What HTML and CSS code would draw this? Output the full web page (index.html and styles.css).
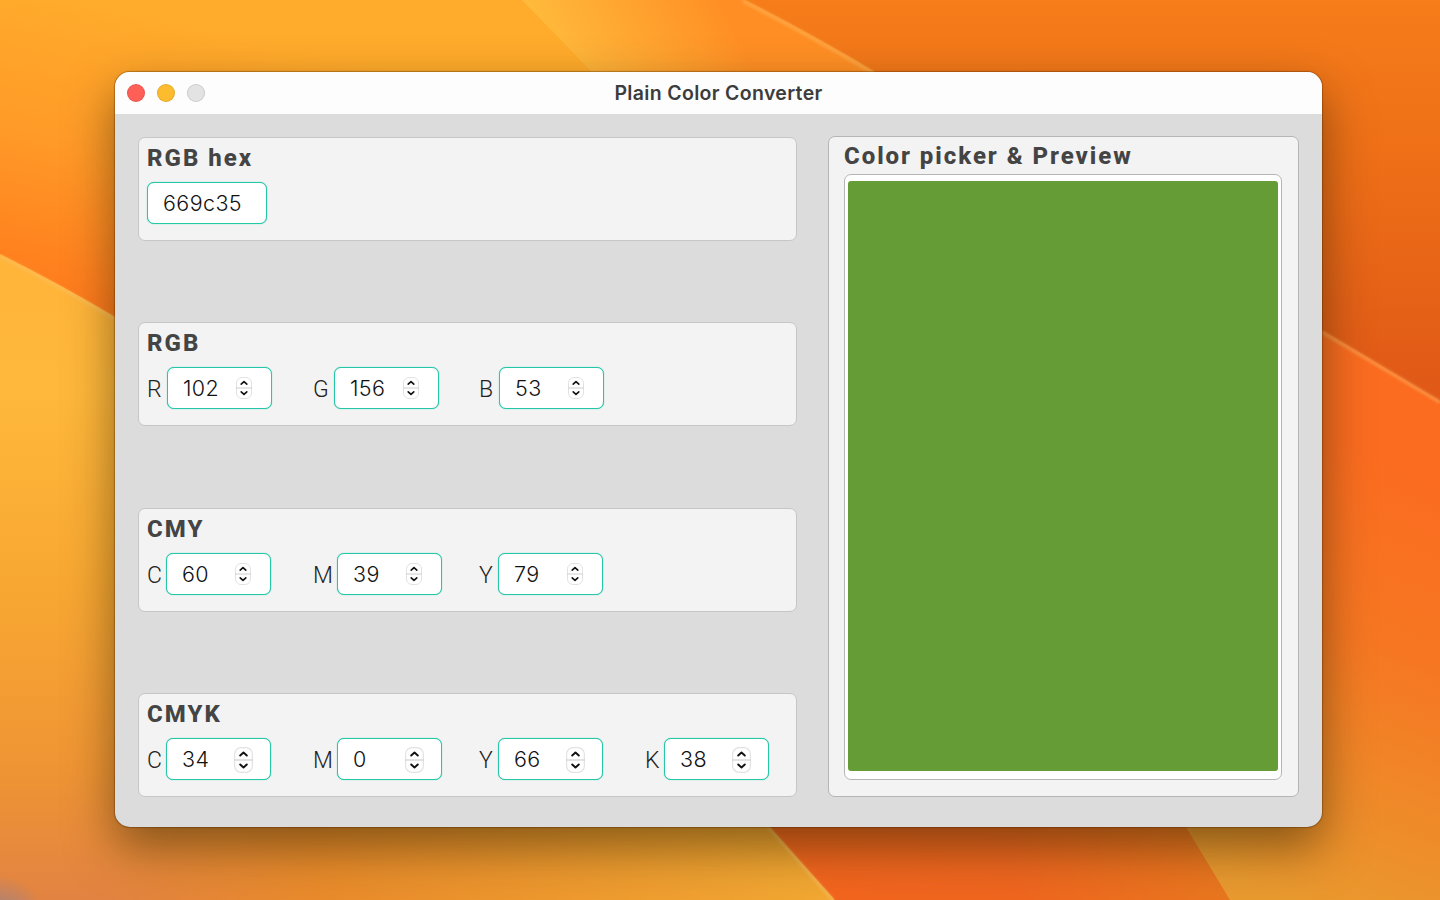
FILE: index.html
```
<!DOCTYPE html>
<html lang="en">
<head>
  <meta charset="UTF-8">
  <meta name="viewport" content="width=device-width, initial-scale=1.0">
  <title>Plain Color Converter</title>
  <link rel="stylesheet" href="styles.css">
</head>
<body>
  <svg class="wallpaper" viewBox="0 0 1440 900" preserveAspectRatio="none" aria-hidden="true">
    <defs>
      <linearGradient id="sky" gradientUnits="userSpaceOnUse" x1="60" y1="0" x2="0" y2="290">
        <stop offset="0" stop-color="#ffab2b"/>
        <stop offset="0.45" stop-color="#ff9b28"/>
        <stop offset="1" stop-color="#ff7a1c"/>
      </linearGradient>
      <linearGradient id="dune" gradientUnits="userSpaceOnUse" x1="0" y1="260" x2="0" y2="900">
        <stop offset="0" stop-color="#ffb43a"/>
        <stop offset="0.2" stop-color="#ffb83b"/>
        <stop offset="0.5" stop-color="#f8a832"/>
        <stop offset="0.8" stop-color="#ef9434"/>
        <stop offset="1" stop-color="#e28342"/>
      </linearGradient>
      <linearGradient id="duneGlow" gradientUnits="userSpaceOnUse" x1="100" y1="0" x2="830" y2="0">
        <stop offset="0" stop-color="#e98b2b" stop-opacity="0"/>
        <stop offset="0.3" stop-color="#e98b2b"/>
        <stop offset="1" stop-color="#f2a832"/>
      </linearGradient>
      <radialGradient id="corner" gradientUnits="userSpaceOnUse" cx="0" cy="920" r="45">
        <stop offset="0" stop-color="#98828a"/>
        <stop offset="1" stop-color="#98828a" stop-opacity="0"/>
      </radialGradient>
      <linearGradient id="band" gradientUnits="userSpaceOnUse" x1="540" y1="40" x2="700" y2="-40">
        <stop offset="0" stop-color="#ffbb3c"/>
        <stop offset="1" stop-color="#ff8f24"/>
      </linearGradient>
      <linearGradient id="ridge" gradientUnits="userSpaceOnUse" x1="0" y1="0" x2="0" y2="390">
        <stop offset="0" stop-color="#f67d1a"/>
        <stop offset="0.4" stop-color="#ee6f17"/>
        <stop offset="1" stop-color="#e05917"/>
      </linearGradient>
      <linearGradient id="slope" gradientUnits="userSpaceOnUse" x1="1440" y1="480" x2="1280" y2="900">
        <stop offset="0" stop-color="#fb6c20"/>
        <stop offset="0.4" stop-color="#f67722"/>
        <stop offset="1" stop-color="#e99a2f"/>
      </linearGradient>
      <linearGradient id="gap" gradientUnits="userSpaceOnUse" x1="800" y1="0" x2="1230" y2="0">
        <stop offset="0" stop-color="#f3651e"/>
        <stop offset="0.5" stop-color="#ef661f"/>
        <stop offset="1" stop-color="#e9771f"/>
      </linearGradient>
    </defs>
    <rect width="1440" height="900" fill="url(#sky)"/>
    <path d="M522 0H745Q812 34 875 72L900 300L592 72Z" fill="url(#band)"/>
    <path d="M745 0H1440V420L1300 400L875 72Q812 34 745 0Z" fill="url(#ridge)"/>
    <path d="M0 254Q60 284 115 317L600 640L770 827L835 900H0Z" fill="url(#dune)"/>
    <path d="M100 740H690L770 827L835 900H100Z" fill="url(#duneGlow)"/>
    <rect y="840" width="70" height="60" fill="url(#corner)"/>
    <path d="M770 827L700 740H1180L1230 900H835Z" fill="url(#gap)"/>
    <path d="M1300 318L1322 330L1440 401V900H1230L1186 827L1100 700Z" fill="url(#slope)"/>
    <g class="edges">
      <path d="M743 1Q810 35 873 73"/>
      <path d="M0 256Q60 286 115 319"/>
      <path d="M1322 332L1440 402"/>
      <path d="M768 827L833 900"/>
    </g>
  </svg>

  <div class="window">
    <header class="titlebar">
      <div class="lights">
        <span class="light close"></span>
        <span class="light minimize"></span>
        <span class="light disabled"></span>
      </div>
      <h1>Plain Color Converter</h1>
    </header>

    <main class="content">
      <div class="models">
        <section class="panel">
          <h2>RGB hex</h2>
          <div class="fields">
            <span class="input hex">669c35</span>
          </div>
        </section>

        <section class="panel">
          <h2>RGB</h2>
          <div class="fields">
            <div class="field"><label class="w20">R</label><span class="input">102<svg class="stepper" viewBox="0 0 16 22"><use href="#arrows"/></svg></span></div>
            <div class="field"><label class="w21">G</label><span class="input">156<svg class="stepper" viewBox="0 0 16 22"><use href="#arrows"/></svg></span></div>
            <div class="field"><label class="w20">B</label><span class="input">53<svg class="stepper" viewBox="0 0 16 22"><use href="#arrows"/></svg></span></div>
          </div>
        </section>

        <section class="panel">
          <h2>CMY</h2>
          <div class="fields">
            <div class="field"><label>C</label><span class="input">60<svg class="stepper" viewBox="0 0 16 22"><use href="#arrows"/></svg></span></div>
            <div class="field"><label class="w24">M</label><span class="input">39<svg class="stepper" viewBox="0 0 16 22"><use href="#arrows"/></svg></span></div>
            <div class="field"><label>Y</label><span class="input">79<svg class="stepper" viewBox="0 0 16 22"><use href="#arrows"/></svg></span></div>
          </div>
        </section>

        <section class="panel">
          <h2>CMYK</h2>
          <div class="fields large">
            <div class="field"><label>C</label><span class="input">34<svg class="stepper" viewBox="0 0 16 22"><use href="#arrows"/></svg></span></div>
            <div class="field"><label class="w24">M</label><span class="input">0<svg class="stepper" viewBox="0 0 16 22"><use href="#arrows"/></svg></span></div>
            <div class="field"><label>Y</label><span class="input">66<svg class="stepper" viewBox="0 0 16 22"><use href="#arrows"/></svg></span></div>
            <div class="field"><label>K</label><span class="input">38<svg class="stepper" viewBox="0 0 16 22"><use href="#arrows"/></svg></span></div>
          </div>
        </section>
      </div>

      <section class="panel preview">
        <h2>Color picker &amp; Preview</h2>
        <div class="well"><div class="swatch"></div></div>
      </section>
    </main>
  </div>

  <svg class="symbols" aria-hidden="true">
    <symbol id="arrows" viewBox="0 0 16 22">
      <rect x="0.5" y="0.5" width="15" height="21" rx="5.5" fill="#fff" stroke="#e2e2e2"/>
      <path d="M0 11H16" stroke="#cfcfcf"/>
      <path d="M5.2 7.2L8 4.6L10.8 7.2M5.2 14.8L8 17.4L10.8 14.8" fill="none" stroke="#111" stroke-width="1.6" stroke-linecap="round" stroke-linejoin="round"/>
    </symbol>
  </svg>
</body>
</html>
```
FILE: styles.css
```
* {
  box-sizing: border-box;
}

body {
  margin: 0;
  height: 100vh;
  overflow: hidden;
  padding: 72px 118px 73px 115px;
  font-family: Inter, "Liberation Sans", sans-serif;
  background: #f8921f;
}

.wallpaper {
  position: absolute;
  top: 0;
  left: 0;
  width: 100%;
  height: 100%;
}

.edges {
  fill: none;
  stroke: #ffc670;
  stroke-width: 4;
  opacity: 0.35;
  filter: blur(1px);
}

.symbols {
  display: none;
}

.window {
  position: relative;
  height: 755px;
  display: flex;
  flex-direction: column;
  border-radius: 15px;
  background: #dcdcdc;
  box-shadow: 0 0 1px 1px rgba(70, 35, 0, 0.35), 0 20px 48px rgba(40, 30, 0, 0.52);
}

.titlebar {
  height: 42px;
  display: grid;
  grid-template-columns: 200px 1fr 200px;
  align-items: center;
  background: #fdfdfd;
  border-radius: 15px 15px 0 0;
}

.lights {
  display: flex;
  gap: 12px;
  padding-left: 12px;
}

.light {
  width: 18px;
  height: 18px;
  border-radius: 50%;
  border: 1px solid rgba(0, 0, 0, 0.1);
}

.close {
  background: #fe5f57;
}

.minimize {
  background: #fdbc2e;
}

.disabled {
  background: #e3e3e3;
}

h1 {
  margin: 0;
  text-align: center;
  font-size: 19.5px;
  line-height: 41px;
  font-weight: 600;
  letter-spacing: 0.33px;
  color: #3c3c3c;
}

.content {
  flex: 1;
  display: flex;
  gap: 31px;
  padding: 22px 23px 30px;
}

.models {
  width: 659px;
  padding-top: 1px;
  display: flex;
  flex-direction: column;
  justify-content: space-between;
}

.panel {
  height: 104px;
  padding: 5px 8px;
  background: #f3f3f3;
  border: 1px solid #c6c6c6;
  border-radius: 7px;
}

h2 {
  margin: 0;
  font-family: Roboto, sans-serif;
  font-size: 24px;
  line-height: 30px;
  font-weight: 800;
  letter-spacing: 2px;
  color: #444;
}

.fields {
  display: flex;
  margin-top: 9px;
}

.field {
  flex: 0 0 166px;
  display: flex;
  align-items: center;
}

label {
  width: 19px;
  padding-top: 3px;
  font-family: Roboto, sans-serif;
  font-size: 23px;
  font-weight: 300;
  color: #222;
}

.w20 {
  width: 20px;
}

.w21 {
  width: 21px;
}

.w24 {
  width: 24px;
}

.input {
  width: 105px;
  height: 42px;
  display: flex;
  align-items: center;
  justify-content: space-between;
  padding: 0 19px 0 15px;
  background: #fff;
  border: 1px solid #26c6a8;
  box-shadow: 0 0 1px #26c6a8;
  border-radius: 7px;
  font-size: 21.5px;
  font-weight: 300;
  letter-spacing: 0.4px;
  color: #111;
}

.hex {
  width: 120px;
}

.stepper {
  width: 16px;
  height: 22px;
}

.large .input {
  padding-right: 17px;
}

.large .stepper {
  width: 19px;
  height: 26px;
  margin-top: 2px;
}

.preview {
  flex: 1;
  height: auto;
  display: flex;
  flex-direction: column;
  padding: 4px 16px 16px 15px;
  border-color: #b5b5b5;
}

.preview h2 {
  letter-spacing: 1.95px;
}

.well {
  flex: 1;
  margin-top: 3px;
  padding: 6px 3px 8px;
  background: #fff;
  border: 1px solid #b5b5b5;
  border-radius: 7px;
}

.swatch {
  height: 100%;
  border-radius: 3px;
  background: #669c35;
}
```
